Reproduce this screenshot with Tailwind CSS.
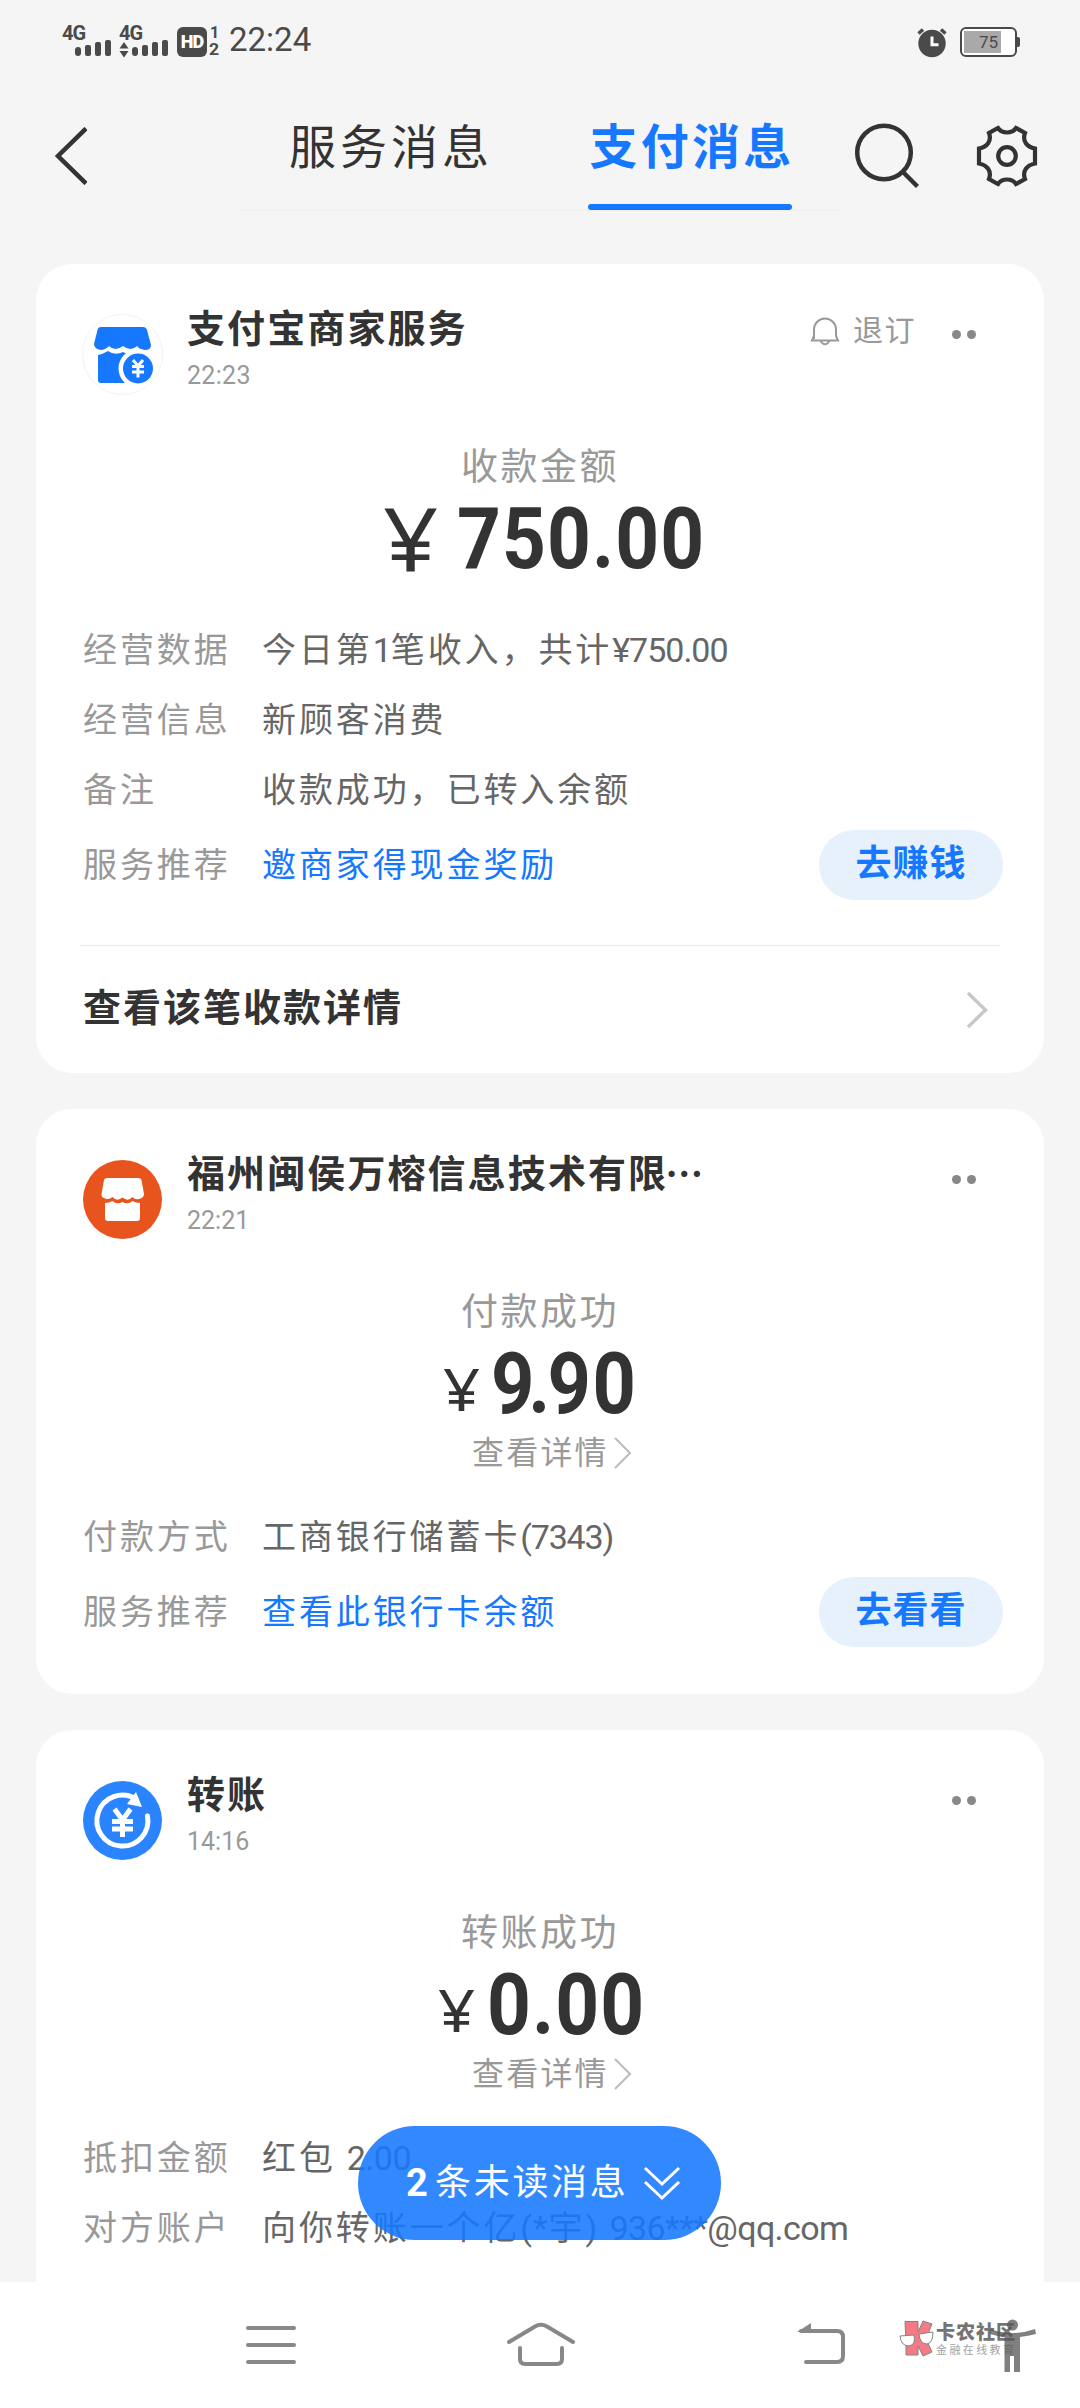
<!DOCTYPE html>
<html lang="zh-CN">
<head>
<meta charset="utf-8">
<title>支付消息</title>
<script src="https://cdn.jsdelivr.net/npm/@tailwindcss/browser@4"></script>
</head>
<body class="bg-[#f5f5f5]">
<div class="relative flex h-[2408px] w-[1080px] flex-col overflow-hidden bg-[#f5f5f5] font-['Roboto','Noto_Sans_CJK_SC',sans-serif] text-[#333]">

  <!-- status bar -->
  <div class="flex h-[84px] shrink-0 items-start justify-between pl-[62px] pr-[60px] pt-[24px] text-[#4a4a4a]">
    <div class="flex items-start">
      <div class="w-[57px]">
        <div class="h-[16px] text-[20px] font-bold leading-[18px] tracking-[-1px]">4G</div>
        <div class="flex h-[16px] items-end gap-[4px] pl-[13px]">
          <i class="h-[9px] w-[6px] rounded-[3px] bg-[#4a4a4a]"></i><i class="h-[11px] w-[6px] rounded-[2px] bg-[#4a4a4a]"></i><i class="h-[14px] w-[6px] rounded-[2px] bg-[#4a4a4a]"></i><i class="h-[16px] w-[6px] rounded-[2px] bg-[#4a4a4a]"></i>
        </div>
      </div>
      <div class="w-[58px]">
        <div class="h-[16px] text-[20px] font-bold leading-[18px] tracking-[-1px]">4G</div>
        <div class="flex h-[16px] items-end gap-[4px]">
          <svg class="mr-[-1px] mb-[-2px] h-[16px] w-[10px]" viewBox="0 0 10 16" fill="#4a4a4a"><path d="M5 0l4.500 6.500h-9zM.5 9h9L5 15.500z"/></svg>
          <i class="h-[9px] w-[6px] rounded-[3px] bg-[#4a4a4a]"></i><i class="h-[11px] w-[6px] rounded-[2px] bg-[#4a4a4a]"></i><i class="h-[14px] w-[6px] rounded-[2px] bg-[#4a4a4a]"></i><i class="h-[16px] w-[6px] rounded-[2px] bg-[#4a4a4a]"></i>
        </div>
      </div>
      <div class="mt-[3px] flex h-[30px] w-[30px] items-center justify-center rounded-[6px] bg-[#4a4a4a] text-[18px] font-black leading-none tracking-[-1px] text-white">HD</div>
      <div class="ml-[2px] mt-[3px] flex h-[30px] w-[20px] flex-col justify-between font-bold text-[16px] leading-[12px]"><span class="pl-px">1</span><span class="mb-[1px] origin-left scale-x-110">2</span></div>
      <div class="h-[30px] text-[33px] leading-[31px]">22:24</div>
    </div>
    <div class="flex items-start gap-[13px] pt-[3px]">
      <svg class="h-[32px] w-[30px]" viewBox="0 0 30 32"><circle cx="15" cy="16.500" r="13.700" fill="#4a4a4a"/><path d="M1.500 6.500L6 2.500M28.500 6.500L24 2.500" stroke="#4a4a4a" stroke-width="3.500"/><path d="M15 9.500v8.200h6.500" fill="none" stroke="#fff" stroke-width="3"/></svg>
      <div class="flex items-center">
        <div class="flex h-[30px] w-[57px] items-center rounded-[6px] border-2 border-[#4a4a4a] bg-white p-[2px]">
          <div class="h-[22px] w-[37px] bg-[#a9a9a9] pr-[3px] text-right text-[17px] leading-[22px]">75</div>
        </div>
        <i class="h-[10px] w-[3px] rounded-r-[2px] bg-[#4a4a4a]"></i>
      </div>
    </div>
  </div>

  <!-- navigation header -->
  <div class="flex h-[180px] shrink-0 items-start">
    <svg class="ml-[53px] mt-[43px] h-[58px] w-[34px]" viewBox="0 0 34 58" fill="none" stroke="#333" stroke-width="4.500"><path d="M33 1.500L5 29l28 27.500"/></svg>
    <div class="ml-[153px] flex h-[127px] w-[599px] items-end border-b border-[#eee]">
      <div class="h-[127px] w-[348px] pl-[49px] pt-[37px] text-[47px] leading-[56px] tracking-[4px]">服务消息</div>
      <div class="h-[127px] w-[204px] pt-[37px] text-center text-[#1677ff]">
        <div class="mr-[-4px] text-[48px] font-bold leading-[56px] tracking-[3.200px]">支付消息</div>
        <div class="mt-[28px] h-[6px] rounded-full bg-[#1677ff]"></div>
      </div>
    </div>
    <svg class="ml-[13px] mt-[37px] h-[70px] w-[70px]" viewBox="0 0 70 70" fill="none" stroke="#333" stroke-width="4.500"><circle cx="32" cy="31.500" r="26.800"/><path d="M51 51l14.500 14.500"/></svg>
    <svg class="ml-[51px] mt-[38px] h-[68px] w-[68px]" viewBox="-34 -34 68 68" fill="none" stroke="#333" stroke-width="4.200"><path d="M-9 -28C-5 -22 5 -22 9 -28L18 -23C15 -15 20 -9 28 -7.500L28 7.500C20 9 15 15 18 23L9 28C5 22 -5 22 -9 28L-18 23C-15 15 -20 9 -28 7.500L-28 -7.500C-20 -9 -15 -15 -18 -23Z"/><circle r="8.800"/></svg>
  </div>

  <!-- message list -->
  <div class="flex h-[2018px] shrink-0 flex-col gap-[36px] overflow-hidden px-[36px]">

    <section class="h-[809px] shrink-0 rounded-[36px] bg-white">
      <header class="flex h-[126px] items-start pl-[46px] pt-[43px]">
        <div class="mt-[7px] flex h-[81px] w-[81px] items-center justify-center rounded-full border border-[#f3f3f3]">
          <svg class="h-[60px] w-[60px]" viewBox="0 0 60 60" fill="#1677ff"><path d="M8 2H50Q53 2 54 5L58 20Q58 25 52 25Q47 25 44 21Q38 27 30 21Q22 27 16 21Q12 25 8 25Q1 24 1 19L4.500 5Q5 2 8 2Z"/><path d="M5 30Q10 29 15 26Q22 31 30 27Q36 31 44 27Q53 29 53 32V58H8Q5 58 5 55Z"/><circle cx="45" cy="43.500" r="19.500" fill="#fff"/><circle cx="45" cy="43.500" r="15"/><path d="M40 35l5 6 5-6M45 41v11.500M39 41.500h12M39 47h12" fill="none" stroke="#fff" stroke-width="3"/></svg>
        </div>
        <div class="ml-[24px] flex-1">
          <h2 class="h-[44px] text-[38px] font-bold leading-[45px] tracking-[2.100px]">支付宝商家服务</h2>
          <div class="mt-[9px] text-[25px] leading-[31px] text-[#999] tracking-[0.300px]">22:23</div>
        </div>
        <div class="flex h-[48px] items-center text-[#999]">
          <svg class="h-[32px] w-[32px]" viewBox="0 0 32 32" fill="none" stroke="#999" stroke-width="2"><path d="M5 24V14.500a11 11 0 0 1 22 0V21l2 4.500H3L5 21M11.500 26q4.500 6.500 9 0"/></svg>
          <span class="ml-[12px] w-[99px] text-[30px] leading-[44px] tracking-[1.400px]">退订</span>
        </div>
        <div class="mr-[68px] mt-[23px] flex gap-[6px]"><i class="size-[9px] rounded-full bg-[#888]"></i><i class="size-[9px] rounded-full bg-[#888]"></i></div>
      </header>
      <div class="mt-[52px] text-center text-[37px] leading-[52px] tracking-[2.500px] text-[#999]">收款金额</div>
      <div class="mt-[13px] flex h-[64px] items-center pl-[347px] leading-[64px]">
        <span class="mt-[-4px] w-[74px] origin-left scale-x-110 font-['Noto_Sans'] text-[88px]">¥</span>
        <span class="origin-left scale-x-[0.89] whitespace-nowrap text-[86px] font-bold tracking-[1.200px]">750.00</span>
      </div>
      <div class="mt-[44px] text-[34px] tracking-[2.900px] text-[#666]">
        <div class="flex h-[70px] items-center pl-[47px]"><span class="w-[179px] text-[#999]">经营数据</span><span class="whitespace-nowrap">今日第<span class="tracking-[-1px]">1</span>笔收入，共计<span class="tracking-[-1px]">¥750.00</span></span></div>
        <div class="flex h-[70px] items-center pl-[47px]"><span class="w-[179px] text-[#999]">经营信息</span><span>新顾客消费</span></div>
        <div class="flex h-[70px] items-center pl-[47px]"><span class="w-[179px] text-[#999]">备注</span><span>收款成功，已转入余额</span></div>
        <div class="flex h-[80px] items-center pl-[47px] pr-[41px]"><span class="w-[179px] text-[#999]">服务推荐</span><span class="flex-1 text-[#1677ff]">邀商家得现金奖励</span><span class="h-[70px] w-[184px] rounded-full bg-[#e7f1fc] text-center text-[36px] font-bold leading-[68px] tracking-[1px] text-[#1677ff]">去赚钱</span></div>
      </div>
      <div class="mx-[44px] mt-[40px] h-px bg-[#e8e8e8]"></div>
      <div class="flex h-[120px] items-center pl-[47px] pr-[55px]"><span class="mt-[4px] flex-1 text-[38px] font-bold tracking-[2px]">查看该笔收款详情</span>
        <svg class="mt-[7px] h-[38px] w-[24px]" viewBox="0 0 24 38" fill="none" stroke="#c8c8c8" stroke-width="3.500"><path d="M3 2l17.500 17L3 36"/></svg></div>
    </section>

    <section class="h-[585px] shrink-0 rounded-[36px] bg-white">
      <header class="flex h-[126px] items-start pl-[47px] pt-[43px]">
        <svg class="mt-[8px] h-[79px] w-[79px]" viewBox="0 0 79 79"><circle cx="39.500" cy="39.500" r="39.500" fill="#e8541e"/><g fill="#fff"><path d="M24 18H55Q58 18 58.500 20L61 34Q61 38 56 39Q52 40 49.500 37Q45 42 39.500 37.500Q34 42 29.500 37Q26 40 22 38.500Q18 37 18.500 34L21 20Q21.500 18 24 18Z"/><path d="M22 43Q26 43 29.500 41Q34 45 39.500 42Q45 45 49.500 41Q53 43 57 43V58Q57 61 54 61H25Q22 61 22 58Z"/></g></svg>
        <div class="ml-[25px] flex-1">
          <h2 class="flex h-[44px] whitespace-nowrap text-[38px] font-bold leading-[45px] tracking-[2.100px]"><span>福州闽侯万榕信息技术有限</span><span class="ml-[-3px] h-[44px] font-['Noto_Sans_CJK_SC'] leading-[40px] tracking-[-3px]">⋯</span></h2>
          <div class="mt-[9px] text-[25px] leading-[31px] text-[#999]">22:21</div>
        </div>
        <div class="mr-[68px] mt-[23px] flex gap-[6px]"><i class="size-[9px] rounded-full bg-[#888]"></i><i class="size-[9px] rounded-full bg-[#888]"></i></div>
      </header>
      <div class="mt-[52px] text-center text-[37px] leading-[52px] tracking-[2.500px] text-[#999]">付款成功</div>
      <div class="mt-[13px] flex h-[64px] items-center pl-[407px] leading-[64px]">
        <span class="mt-[8px] w-[48px] origin-left scale-x-110 font-['Noto_Sans'] text-[59px]">¥</span>
        <span class="origin-left scale-x-[0.88] whitespace-nowrap text-[86px] font-bold tracking-[1.600px]"><span class="tracking-[-7px]">9</span><span class="tracking-[-3px]">.</span>90</span>
      </div>
      <div class="mt-[12px] flex h-[50px] items-center pl-[436px] text-[32px] tracking-[2.200px] text-[#999]">查看详情
        <svg class="ml-[4px] h-[34px] w-[20px]" viewBox="0 0 20 34" fill="none" stroke="#bbb" stroke-width="2"><path d="M2 2l15 15L2 32"/></svg></div>
      <div class="mt-[24px] text-[34px] tracking-[2.900px] text-[#666]">
        <div class="flex h-[70px] items-center pl-[47px]"><span class="w-[179px] text-[#999]">付款方式</span><span>工商银行储蓄卡<span class="tracking-[-1.200px]">(7343)</span></span></div>
        <div class="flex h-[80px] items-center pl-[47px] pr-[41px]"><span class="w-[179px] text-[#999]">服务推荐</span><span class="flex-1 text-[#1677ff]">查看此银行卡余额</span><span class="h-[70px] w-[184px] rounded-full bg-[#e7f1fc] text-center text-[36px] font-bold leading-[68px] tracking-[1px] text-[#1677ff]">去看看</span></div>
      </div>
    </section>

    <section class="h-[585px] shrink-0 rounded-[36px] bg-white">
      <header class="flex h-[126px] items-start pl-[47px] pt-[43px]">
        <svg class="mt-[8px] h-[79px] w-[79px]" viewBox="0 0 79 79"><circle cx="39.500" cy="39.500" r="39.500" fill="#2b84ff"/><path d="M64.500 35A25.500 25.500 0 1 1 53 18" fill="none" stroke="#fff" stroke-width="5" stroke-linecap="round"/><path d="M53 11L59 26L44 23Z" fill="#fff"/><path d="M31.500 28l8 11 8-11M39.500 38v18M29 40.500h21M29 48h21" fill="none" stroke="#fff" stroke-width="5"/></svg>
        <div class="ml-[25px] flex-1">
          <h2 class="h-[44px] text-[38px] font-bold leading-[45px] tracking-[2.100px]">转账</h2>
          <div class="mt-[9px] text-[25px] leading-[31px] text-[#999]">14:16</div>
        </div>
        <div class="mr-[68px] mt-[23px] flex gap-[6px]"><i class="size-[9px] rounded-full bg-[#888]"></i><i class="size-[9px] rounded-full bg-[#888]"></i></div>
      </header>
      <div class="mt-[52px] text-center text-[37px] leading-[52px] tracking-[2.500px] text-[#999]">转账成功</div>
      <div class="mt-[13px] flex h-[64px] items-center pl-[402px] leading-[64px]">
        <span class="mt-[8px] w-[49px] origin-left scale-x-110 font-['Noto_Sans'] text-[59px]">¥</span>
        <span class="origin-left scale-x-[0.89] whitespace-nowrap text-[86px] font-bold tracking-[1.200px]">0.00</span>
      </div>
      <div class="mt-[12px] flex h-[50px] items-center pl-[436px] text-[32px] tracking-[2.200px] text-[#999]">查看详情
        <svg class="ml-[4px] h-[34px] w-[20px]" viewBox="0 0 20 34" fill="none" stroke="#bbb" stroke-width="2"><path d="M2 2l15 15L2 32"/></svg></div>
      <div class="mt-[24px] text-[34px] tracking-[2.900px] text-[#666]">
        <div class="flex h-[70px] items-center pl-[47px]"><span class="w-[179px] text-[#999]">抵扣金额</span><span>红包<span class="ml-[3px] tracking-[-0.500px]"> 2.00</span></span></div>
        <div class="flex h-[70px] items-center pl-[47px]"><span class="w-[179px] text-[#999]">对方账户</span><span class="whitespace-nowrap">向你转账一个亿<span class="tracking-[1px]">(*</span>宇<span class="tracking-[-0.600px]">)<span class="ml-[5px]"> 936***@qq.com</span></span></span></div>
      </div>
    </section>
  </div>

  <!-- floating unread pill -->
  <div class="absolute left-[358px] top-[2126px] flex h-[114px] w-[363px] items-center rounded-full bg-[#1677ff]/88 pl-[48px] text-[36px] tracking-[2.700px] text-white">
    <span class="w-[29px] text-[38px] font-bold">2</span><span class="whitespace-nowrap">条未读消息</span>
    <svg class="ml-[14px] h-[36px] w-[38px]" viewBox="0 0 38 36" fill="none" stroke="#fff" stroke-width="3"><path d="M2 3l17 16L36 3M2 17l17 16 17-16"/></svg>
  </div>

  <!-- system navigation -->
  <div class="relative flex h-[126px] shrink-0 items-start bg-white pt-[38px]">
    <svg class="ml-[244px] h-[52px] w-[54px]" viewBox="0 0 54 52" stroke="#888" stroke-width="4" stroke-linecap="round"><path d="M4 8h46M4 25h46M4 42h46"/></svg>
    <svg class="ml-[206px] h-[52px] w-[74px]" viewBox="0 0 74 52" fill="none" stroke="#888" stroke-width="4" stroke-linecap="round"><path d="M5 22L31 6.500Q37 3 43 6.500L69 22M16 28V39Q16 44 21 44H53Q58 44 58 39V28"/></svg>
    <svg class="ml-[215px] h-[52px] w-[60px]" viewBox="0 0 60 52" fill="none" stroke="#888" stroke-width="4" stroke-linecap="round"><path d="M8 11H44Q50 11 50 17V36Q50 42 44 42H13"/><path d="M4 12L18 3V12Z" fill="#888" stroke="none"/></svg>
    <div class="ml-[46px] flex w-[130px] items-start opacity-90">
      <svg class="h-[38px] w-[36px] shrink-0" viewBox="0 0 36 38"><path d="M6 1.500H19V12L24 1L33 4L27 19L33 32L24 36L19 26V35H7V22Z" fill="#f36c78" stroke="#777"/><path d="M1 16l14-1q2 10-5 11-8 0-9-10zM20 14l14-2q0 11-6 12-7 0-8-10z" fill="#fff" stroke="#777"/></svg>
      <div class="ml-[1px] whitespace-nowrap">
        <div class="text-[19px] font-black leading-[26px] tracking-[1px] text-[#666]">卡农社区</div>
        <div class="mt-[-3px] text-[11px] leading-[15px] tracking-[2.400px] text-[#999]">金融在线教育</div>
      </div>
    </div>
    <svg class="absolute left-[988px] top-[34px] h-[58px] w-[50px]" viewBox="0 0 50 58" fill="#555" fill-opacity=".75"><circle cx="24.500" cy="9" r="5.500"/><path d="M2 13Q25 21 47 13L48 18Q40 20 32 21V56H26V40H22V56H16.500V21Q8 20 2 18Z"/></svg>
  </div>
</div>
</body>
</html>
